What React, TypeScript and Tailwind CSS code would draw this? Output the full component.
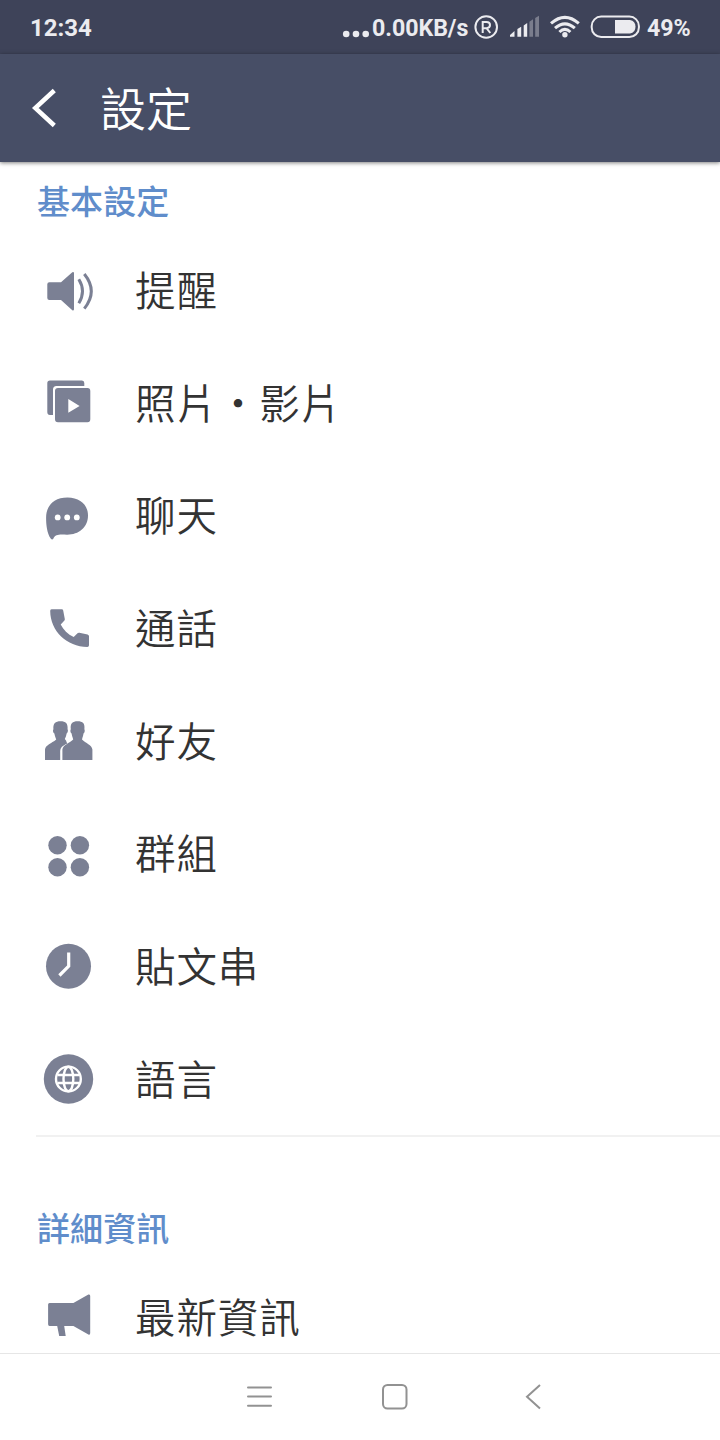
import type { ReactNode } from "react";

type Row = { label: string; height: string; viewBox: string; icon: ReactNode };

const rows: Row[] = [
  {
    label: "提醒",
    height: "h-[113px]",
    viewBox: "36 235 64 113",
    icon: (
      <>
        <path d="M49.3 282.3H61L72.3 272.2Q74 271.5 74 273.3V309.3Q74 311 72.3 310.2L61 300H49.3Q47.3 300 47.3 298V284.3Q47.3 282.3 49.3 282.3Z" />
        <path d="M78.8 279.2Q86.2 291.2 78.8 303.2M84.3 274Q98.3 291.3 84.3 308.6" fill="none" stroke="#7b8094" strokeWidth="3" />
      </>
    ),
  },
  {
    label: "照片・影片",
    height: "h-[112px]",
    viewBox: "36 348 64 112",
    icon: (
      <>
        <path d="M50 380.5H82Q84.3 380.5 84.3 383V386H56.5Q53 386 53 389.5V415H50Q47.3 415 47.3 412V383.2Q47.3 380.5 50 380.5Z" />
        <path fillRule="evenodd" d="M58 388H87.5Q90.3 388 90.3 391V419.2Q90.3 422.2 87.5 422.2H58Q55 422.2 55 419.2V391Q55 388 58 388ZM68.3 399V412.8L79.6 405.9Z" />
      </>
    ),
  },
  {
    label: "聊天",
    height: "h-[113px]",
    viewBox: "36 460 64 113",
    icon: (
      <>
        <path d="M67.5 497.5C80 497.5 88 505 88 515.5C88 527.5 78.5 534.8 67 534.7C60 534.5 55.5 533.8 53.3 538.8Q52.2 540.5 50.7 538.6C47 533 46.1 525 46.1 517.7C46.1 505 54.5 497.5 67.5 497.5Z" />
        <g fill="#fff">
          <circle cx="57.7" cy="517.4" r="2.9" />
          <circle cx="67.2" cy="517.4" r="2.9" />
          <circle cx="76.8" cy="517.4" r="2.9" />
        </g>
      </>
    ),
  },
  {
    label: "通話",
    height: "h-[113px]",
    viewBox: "36 573 64 113",
    icon: (
      <path d="M51.5 609.2H61.8Q63 609.2 63.2 610.5L64.8 619Q65 620 64.2 620.8L60.7 624.6C63.3 630 67.8 634.5 73.7 637L77.5 633.3Q78.3 632.5 79.4 632.8L87.6 634.6Q89 635 89 636.3V645.3Q89 647 87.3 647C67 646.8 50.3 631 50.2 611Q50.1 609.2 51.5 609.2Z" />
    ),
  },
  {
    label: "好友",
    height: "h-[112px]",
    viewBox: "36 686 64 112",
    icon: (
      <>
        <path d="M60.5 721.3C65.8 721.3 67.9 723.3 67.6 729.2C68.4 730.2 67.7 733 66.6 733.6C66.3 735.8 65.6 737.4 64.8 739L66.2 740.8L66.5 742L67.3 743.5C62.4 745.8 60.4 747.6 60.2 751.3V760H45V749.5C45.5 745 51.5 743.5 56.2 739.5C55.5 737.4 54.7 735.8 54.4 733.6C53 733 52.6 730.2 53.4 729.2C53 723.3 55.4 721.3 60.5 721.3Z" />
        <path d="M77.6 721.3C82.9 721.3 85 723.3 84.4 729.2C85.1 730.2 84.7 733 83.5 733.6C83.2 735.8 82.6 737.4 82 739.4C85.5 742.8 92 745 92.4 749.5V760H62.4V749.5C62.8 745 69.5 742.8 73.2 739.4C72.6 737.4 71.9 735.8 71.6 733.6C70.4 733 70 730.2 70.8 729.2C70.2 723.3 72.5 721.3 77.6 721.3Z" />
      </>
    ),
  },
  {
    label: "群組",
    height: "h-[113px]",
    viewBox: "36 798 64 113",
    icon: (
      <>
        <circle cx="57.5" cy="845.2" r="9.2" />
        <circle cx="79.9" cy="845.2" r="9.2" />
        <circle cx="57.5" cy="867.3" r="9.2" />
        <circle cx="79.9" cy="867.3" r="9.2" />
      </>
    ),
  },
  {
    label: "貼文串",
    height: "h-[113px]",
    viewBox: "36 911 64 113",
    icon: (
      <>
        <circle cx="68.5" cy="966.2" r="22.5" />
        <path d="M68.7 952.5V966.2L59.4 975.5" fill="none" stroke="#fff" strokeWidth="3.2" />
      </>
    ),
  },
  {
    label: "語言",
    height: "h-[112px]",
    viewBox: "36 1024 64 112",
    icon: (
      <>
        <circle cx="68.5" cy="1079" r="24.7" />
        <g fill="none" stroke="#fff" strokeWidth="2.4">
          <circle cx="68.4" cy="1079" r="12.4" />
          <ellipse cx="68.4" cy="1079" rx="4.9" ry="12.3" />
          <path d="M57.6 1075H79.2M57.6 1083H79.2" />
        </g>
      </>
    ),
  },
];

const news: Row = {
  label: "最新資訊",
  height: "h-[88px]",
  viewBox: "36 1265 64 88",
  icon: (
    <path d="M49.5 1303H73.4L88.4 1294.6Q90.2 1294 90.2 1296V1333Q90.2 1335.3 88.4 1334.5L73.4 1326H64.2L65.7 1336H59.2L57.2 1326H49.5Q48.1 1326 48.1 1324.3V1304.6Q48.1 1303 49.5 1303Z" />
  ),
};

function SettingRow({ row, lineHeight = "leading-[108px]" }: { row: Row; lineHeight?: string }) {
  return (
    <li className={`flex shrink-0 overflow-hidden pl-9 ${row.height}`}>
      <svg className="h-full w-16 shrink-0" viewBox={row.viewBox} fill="#7b8094">
        {row.icon}
      </svg>
      <span className={`ml-[35px] text-[40.5px] font-[350] tracking-[0.9px] text-[#333] ${lineHeight}`}>{row.label}</span>
    </li>
  );
}

function StatusBar() {
  return (
    <div className="flex h-[54px] items-center bg-[#3e4359] pl-[30px] font-[Roboto,sans-serif] text-[24px] leading-[54px] font-bold text-[#ebebef]">
      <span className="w-[312px] pt-[2px]">12:34</span>
      <svg className="h-[54px] w-[28px]" viewBox="342 0 28 54" fill="#ebebef">
        <circle cx="346.2" cy="34" r="3.3" />
        <circle cx="356" cy="34" r="3.3" />
        <circle cx="365.7" cy="34" r="3.3" />
      </svg>
      <span className="w-[100px] pt-[2px] pl-[2px] text-[23.2px] tracking-[-0.05px]">0.00KB/s</span>
      <svg className="h-[54px] w-[176px]" viewBox="470 0 176 54" fill="none" stroke="#ebebef">
        <circle cx="486.2" cy="27" r="10.8" strokeWidth="2" />
        <path d="M482.7 33V22H486.5Q490 22 490 25.1Q490 28.2 486.5 28.2H482.7M486.5 28.2L490.3 33" strokeWidth="2" />
        <g stroke="none" fill="#ebebef">
          <path d="M510 36.7V35L514.5 31V36.7ZM517.4 36.7V29L521.2 26.8V36.7ZM523.7 36.7V25.5L527.2 23V36.7Z" />
          <path opacity=".35" d="M529.4 36.7V21.7L533 19.2V36.7ZM535.2 36.7V18L539 15.8V36.7Z" />
          <circle cx="564.9" cy="34.7" r="2.7" />
        </g>
        <path d="M551 23.4Q564.9 11.3 578.8 23.4M555 28.2Q564.9 19.5 574.8 28.2M559.4 32Q564.9 26.8 570.4 32" strokeWidth="3" />
        <rect x="591.7" y="16.6" width="47.2" height="20.4" rx="9.5" strokeWidth="2" />
        <path d="M615 20H630Q635.5 21 635.5 26.7Q635.5 32.5 630 33.5H615Z" fill="#ebebef" stroke="none" />
      </svg>
      <span className="pt-[2px] pl-[1px] text-[23.2px]">49%</span>
    </div>
  );
}

export default function App() {
  return (
    <div className="flex h-[1440px] w-[720px] flex-col overflow-hidden bg-white font-['Noto_Sans_CJK_TC',sans-serif]">
      <StatusBar />
      <header className="relative flex h-[108px] shrink-0 bg-[#474e66] text-white shadow-[0_1px_4px_rgba(0,0,0,0.5)]">
        <svg className="h-[108px] w-[100px]" viewBox="0 54 100 108" fill="none" stroke="#fff" strokeWidth="4.5">
          <path d="M54.3 90.5L35.3 108L54.3 125.5" />
        </svg>
        <h1 className="text-[46px] leading-[104px] font-[350]">設定</h1>
      </header>
      <main className="flex h-[1191px] shrink-0 flex-col overflow-hidden">
        <h2 className="h-[73px] shrink-0 pl-[37px] text-[33px] leading-[76px] font-medium tracking-[0.1px] text-[#608dcb]">基本設定</h2>
        <ul>
          {rows.map((row) => (
            <SettingRow key={row.label} row={row} />
          ))}
        </ul>
        <div className="-mt-px ml-9 h-[2px] shrink-0 bg-[#f1f1f1]" />
        <h2 className="h-[128px] shrink-0 pt-[54px] pl-[37px] text-[33px] leading-[72px] font-medium tracking-[0.1px] text-[#608dcb]">詳細資訊</h2>
        <ul>
          <SettingRow row={news} lineHeight="leading-[101px]" />
        </ul>
      </main>
      <nav className="h-[87px] border-t border-[#e6e6e6]">
        <svg className="h-[86px] w-full" viewBox="0 1354 720 86" fill="none" stroke="#929292" strokeWidth="2">
          <path d="M248 1387.5H271M248 1396.6H271M248 1405.7H271" strokeLinecap="round" />
          <rect x="383" y="1385" width="23.5" height="23.5" rx="4.5" />
          <path d="M540 1385L527 1396.7L540 1408.5" />
        </svg>
      </nav>
    </div>
  );
}
